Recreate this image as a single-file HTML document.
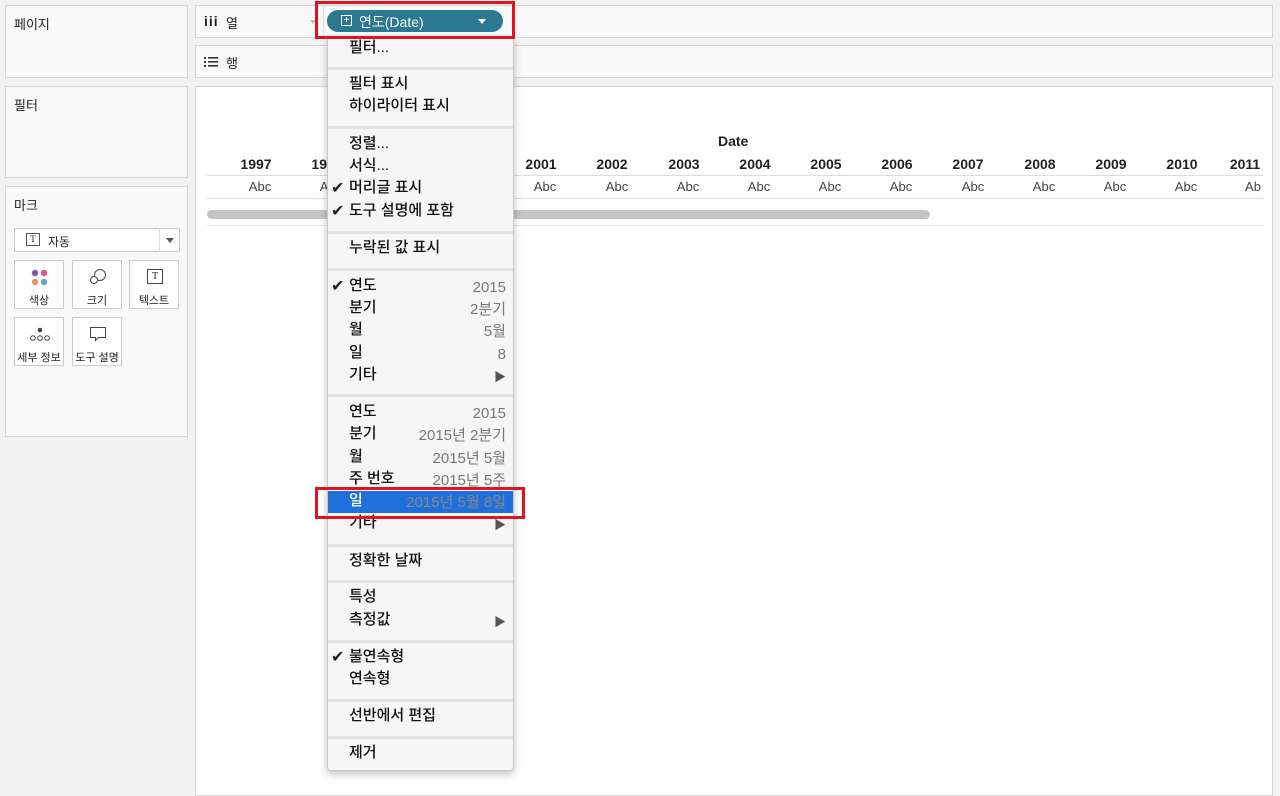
<!DOCTYPE html>
<html><head><meta charset="utf-8"><style>
*{margin:0;padding:0;box-sizing:border-box}
body{width:1280px;height:790px;position:relative;overflow:hidden;background:#f2f2f2;font-family:"Liberation Sans","Noto Sans CJK KR",sans-serif;color:#222}
.a{position:absolute}
.box{position:absolute;background:#f9f9f9;border:1px solid #d4d4d4}
.lbl{font-size:13px}
.yr{position:absolute;top:156px;font-size:14px;font-weight:bold;width:60px;text-align:center}
.abc{position:absolute;top:179px;font-size:13px;color:#444;width:60px;text-align:center}
.card{position:absolute;width:50px;height:49px;background:#fff;border:1px solid #ccc;font-size:11px;text-align:center}
.menu{position:absolute;left:327px;top:38px;width:187px;height:733px;background:#f6f6f6;border:1px solid #c8c8c8;border-radius:0 0 4px 4px;box-shadow:0 3px 8px rgba(0,0,0,.25)}
.mi{position:absolute;left:21px;font-size:15px;line-height:18px;color:#111;white-space:nowrap;font-weight:500}
.mr{position:absolute;right:7px;font-size:15px;line-height:18px;color:#777;white-space:nowrap}
.sep{position:absolute;left:0;right:0;height:3px;background:#e2e2e2}
.ck{position:absolute;left:3px;font-size:16px;line-height:18px;font-family:"DejaVu Sans",sans-serif;color:#222}
</style></head><body>
<div class="box" style="left:5px;top:5px;width:183px;height:73px"><span class="a lbl" style="left:8px;top:8px">페이지</span></div>
<div class="box" style="left:5px;top:86px;width:183px;height:92px"><span class="a lbl" style="left:8px;top:8px">필터</span></div>
<div class="box" style="left:5px;top:186px;width:183px;height:251px"><span class="a lbl" style="left:8px;top:8px">마크</span>
<div class="a" style="left:8px;top:41px;width:166px;height:24px;background:#fff;border:1px solid #ccc;font-size:12px">
<span class="a" style="left:11px;top:4px;width:14px;height:13px;border:1px solid #555;font-size:9px;text-align:center;line-height:11px;font-family:'Liberation Serif',serif">T</span>
<span class="a" style="left:33px;top:4px">자동</span>
<span class="a" style="left:144px;top:0;height:22px;border-left:1px solid #ddd"></span>
<span class="a" style="left:151px;top:9px;border:4px solid transparent;border-top:5px solid #555"></span></div>
<div class="card" style="left:8px;top:73px"><svg class="a" style="left:16px;top:8px" width="18" height="18"><circle cx="4" cy="4" r="3.2" fill="#7b5aa6"/><circle cx="13" cy="4" r="3.2" fill="#e0577a"/><circle cx="4" cy="13" r="3.2" fill="#e8946a"/><circle cx="13" cy="13" r="3.2" fill="#6f9ccf"/></svg><span class="a" style="left:0;right:0;top:31px">색상</span></div>
<div class="card" style="left:66px;top:73px"><svg class="a" style="left:16px;top:7px" width="18" height="18"><circle cx="11" cy="7" r="5.5" fill="none" stroke="#444"/><circle cx="5" cy="12" r="3.5" fill="#fff" stroke="#444"/></svg><span class="a" style="left:0;right:0;top:31px">크기</span></div>
<div class="card" style="left:123px;top:73px"><span class="a" style="left:17px;top:8px;width:16px;height:15px;border:1px solid #444;font-size:10px;line-height:13px;font-family:'Liberation Serif',serif">T</span><span class="a" style="left:0;right:0;top:31px">텍스트</span></div>
<div class="card" style="left:8px;top:130px"><svg class="a" style="left:14px;top:8px" width="22" height="16"><circle cx="11" cy="4" r="2.3" fill="#444"/><circle cx="4" cy="12" r="2.3" fill="none" stroke="#444"/><circle cx="11" cy="12" r="2.3" fill="none" stroke="#444"/><circle cx="18" cy="12" r="2.3" fill="none" stroke="#444"/></svg><span class="a" style="left:0;right:0;top:31px">세부 정보</span></div>
<div class="card" style="left:66px;top:130px"><svg class="a" style="left:16px;top:7px" width="18" height="18"><path d="M1.5 2.5h15v10h-7l-3 3v-3h-5z" fill="none" stroke="#444"/></svg><span class="a" style="left:0;right:0;top:31px">도구 설명</span></div>
</div>
<div class="box" style="left:195px;top:5px;width:1078px;height:33px;background:#f9f9f9">
<span class="a" style="left:8px;top:7px;font-size:14px;font-weight:bold;letter-spacing:1px">iii</span><span class="a lbl" style="left:30px;top:7px">열</span>
<span class="a" style="left:114px;top:14px;border:3px solid transparent;border-top:4px solid #bbb"></span>
<span class="a" style="left:127px;top:0;height:31px;border-left:1px solid #ddd"></span></div>
<div class="box" style="left:195px;top:45px;width:1078px;height:33px">
<svg class="a" style="left:8px;top:10px" width="14" height="12"><g fill="#333"><rect x="0" y="1" width="2" height="2"/><rect x="0" y="5" width="2" height="2"/><rect x="0" y="9" width="2" height="2"/><rect x="4" y="1" width="10" height="1.6"/><rect x="4" y="5" width="10" height="1.6"/><rect x="4" y="9" width="10" height="1.6"/></g></svg>
<span class="a lbl" style="left:30px;top:7px">행</span></div>
<div class="box" style="left:195px;top:86px;width:1078px;height:710px;background:#fff"></div>
<div class="a" style="left:718px;top:133px;font-size:14px;font-weight:bold">Date</div>
<div class="a" style="left:207px;top:175px;width:1056px;height:1px;background:#ddd"></div>
<div class="a" style="left:207px;top:198px;width:1056px;height:1px;background:#ddd"></div>
<div class="a" style="left:207px;top:225px;width:1056px;height:1px;background:#e6e6e6"></div>
<div class="a" style="left:207px;top:210px;width:723px;height:9px;border-radius:5px;background:#c4c4c4"></div>
<div class="yr" style="left:226px">1997</div><div class="yr" style="left:297px">1998</div><div class="yr" style="left:368px;color:#ddd">1999</div><div class="yr" style="left:440px;color:#ddd">2000</div><div class="yr" style="left:511px">2001</div><div class="yr" style="left:582px">2002</div><div class="yr" style="left:654px">2003</div><div class="yr" style="left:725px">2004</div><div class="yr" style="left:796px">2005</div><div class="yr" style="left:867px">2006</div><div class="yr" style="left:938px">2007</div><div class="yr" style="left:1010px">2008</div><div class="yr" style="left:1081px">2009</div><div class="yr" style="left:1152px">2010</div><div class="yr" style="left:1215px">2011</div>
<div class="abc" style="left:230px">Abc</div><div class="abc" style="left:301px">Abc</div><div class="abc" style="left:444px;color:#ddd">Abc</div><div class="abc" style="left:515px">Abc</div><div class="abc" style="left:587px">Abc</div><div class="abc" style="left:658px">Abc</div><div class="abc" style="left:729px">Abc</div><div class="abc" style="left:800px">Abc</div><div class="abc" style="left:871px">Abc</div><div class="abc" style="left:943px">Abc</div><div class="abc" style="left:1014px">Abc</div><div class="abc" style="left:1085px">Abc</div><div class="abc" style="left:1156px">Abc</div><div class="abc" style="left:1223px">Ab</div>
<div class="menu">
<div class="mi" style="top:0">필터...</div>
<div class="sep" style="top:28px"></div>
<div class="mi" style="top:36px">필터 표시</div><div class="mi" style="top:58px">하이라이터 표시</div>
<div class="sep" style="top:87px"></div>
<div class="mi" style="top:96px">정렬...</div><div class="mi" style="top:118px">서식...</div>
<div class="ck" style="top:140px">✔</div><div class="mi" style="top:140px">머리글 표시</div>
<div class="ck" style="top:163px">✔</div><div class="mi" style="top:163px">도구 설명에 포함</div>
<div class="sep" style="top:192px"></div>
<div class="mi" style="top:200px">누락된 값 표시</div>
<div class="sep" style="top:229px"></div>
<div class="ck" style="top:238px">✔</div><div class="mi" style="top:238px">연도</div><div class="mr" style="top:240px">2015</div>
<div class="mi" style="top:260px">분기</div><div class="mr" style="top:262px">2분기</div>
<div class="mi" style="top:282px">월</div><div class="mr" style="top:284px">5월</div>
<div class="mi" style="top:305px">일</div><div class="mr" style="top:307px">8</div>
<div class="mi" style="top:327px">기타</div><div class="mr" style="top:329px;font-size:12px;color:#555">▶</div>
<div class="sep" style="top:355px"></div>
<div class="mi" style="top:364px">연도</div><div class="mr" style="top:366px">2015</div>
<div class="mi" style="top:386px">분기</div><div class="mr" style="top:388px">2015년 2분기</div>
<div class="mi" style="top:409px">월</div><div class="mr" style="top:411px">2015년 5월</div>
<div class="mi" style="top:431px">주 번호</div><div class="mr" style="top:433px">2015년 5주</div>
<div class="a" style="left:0;right:0;top:452px;height:22px;background:#1e6fd9"></div>
<div class="mi" style="top:453px;color:#fff">일</div><div class="mr" style="top:455px;color:#8a8a8a">2015년 5월 8일</div>
<div class="mi" style="top:475px">기타</div><div class="mr" style="top:477px;font-size:12px;color:#555">▶</div>
<div class="sep" style="top:505px"></div>
<div class="mi" style="top:513px">정확한 날짜</div>
<div class="sep" style="top:541px"></div>
<div class="mi" style="top:549px">특성</div>
<div class="mi" style="top:572px">측정값</div><div class="mr" style="top:574px;font-size:12px;color:#555">▶</div>
<div class="sep" style="top:601px"></div>
<div class="ck" style="top:609px">✔</div><div class="mi" style="top:609px">불연속형</div><div class="mi" style="top:631px">연속형</div>
<div class="sep" style="top:660px"></div>
<div class="mi" style="top:668px">선반에서 편집</div>
<div class="sep" style="top:697px"></div>
<div class="mi" style="top:705px">제거</div>
</div>
<div class="a" style="left:315px;top:487px;width:210px;height:32px;border:3px solid #e0141e"></div>
<div class="a" style="left:327px;top:10px;width:176px;height:22px;border-radius:11px;background:#2d7891;color:#fff;font-size:14px">
<span class="a" style="left:14px;top:5px;width:11px;height:11px;border:1px solid #fff;font-size:10px;line-height:9px;text-align:center">+</span>
<span class="a" style="left:32px;top:2px">연도(Date)</span>
<span class="a" style="left:151px;top:9px;border:4px solid transparent;border-top:5px solid #fff"></span></div>
<div class="a" style="left:315px;top:1px;width:200px;height:38px;border:3px solid #e0141e"></div>
</body></html>
